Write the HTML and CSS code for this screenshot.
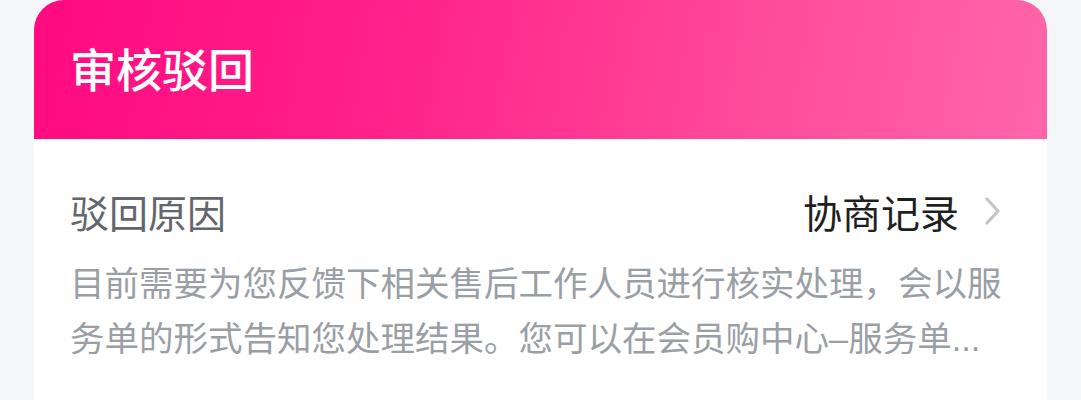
FILE: index.html
```html
<!DOCTYPE html>
<html lang="zh">
<head>
<meta charset="utf-8">
<link rel="stylesheet" href="styles.css">
</head>
<body>
<div class="card">
  <div class="header">
    <div class="title">审核驳回</div>
  </div>
  <div class="content">
    <div class="row">
      <div class="label">驳回原因</div>
      <div class="link">
        <span class="link-text">协商记录</span>
        <svg class="chev" width="20" height="30" viewBox="0 0 20 30"><path d="M4 3 L15 15 L4 27" fill="none" stroke="#c4c4c4" stroke-width="3.2" stroke-linecap="round" stroke-linejoin="round"/></svg>
      </div>
    </div>
    <div class="desc">目前需要为您反馈下相关售后工作人员进行核实处理，会以服务单的形式告知您处理结果。您可以在会员购中心–服务单...</div>
  </div>
</div>
</body>
</html>
```

FILE: styles.css
```css
html, body {
  margin: 0;
  padding: 0;
  background: #f4f7f8;
  font-family: "Noto Sans CJK SC", "Noto Sans", sans-serif;
}
.card {
  margin-left: 34px;
  width: 1013px;
  height: 400px;
  background: #ffffff;
  border-radius: 30px 30px 0 0;
  overflow: hidden;
}
.header {
  height: 139px;
  background: linear-gradient(100deg, #ff0a80 0%, #ff2189 35%, #ff4a9a 70%, #ff66a9 100%);
  display: flex;
  align-items: center;
  padding-left: 36px;
  box-sizing: border-box;
}
.title {
  color: #ffffff;
  font-size: 46px;
  font-weight: 500;
  line-height: 1;
  margin-top: -6px;
}
.content {
  padding: 47px 44px 0 36px;
}
.row {
  display: flex;
  justify-content: space-between;
  align-items: center;
  height: 50px;
}
.label {
  font-size: 39px;
  color: #63666c;
  line-height: 50px;
}
.link {
  display: flex;
  align-items: center;
  gap: 24px;
}
.link-text {
  font-size: 39px;
  color: #1f1f1f;
  line-height: 50px;
}
.chev {
  display: block;
}
.desc {
  margin-top: 21px;
  font-family: "Liberation Sans", "Noto Sans CJK SC", sans-serif;
  font-size: 34.5px;
  line-height: 55px;
  color: #9a9ea5;
}
```
